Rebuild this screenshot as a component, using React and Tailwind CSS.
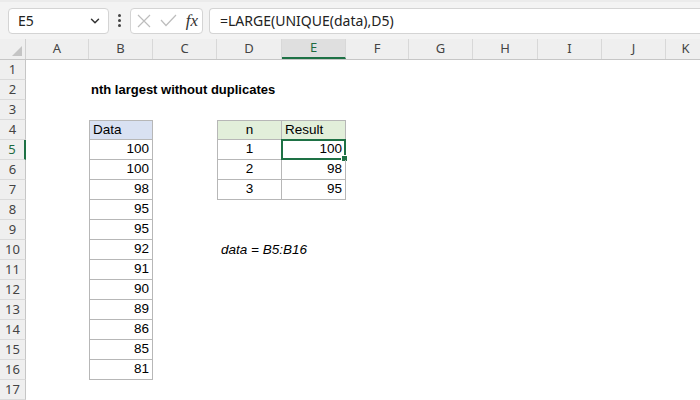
import { ChevronDown } from 'lucide-react'

const cols = [
  { k: 'A', w: 'w-[63px]' },
  { k: 'B', w: 'w-[64px]' },
  { k: 'C', w: 'w-[64px]' },
  { k: 'D', w: 'w-[65px]' },
  { k: 'E', w: 'w-[64px]' },
  { k: 'F', w: 'w-[63px]' },
  { k: 'G', w: 'w-[64px]' },
  { k: 'H', w: 'w-[65px]' },
  { k: 'I', w: 'w-[64px]' },
  { k: 'J', w: 'w-[64px]' },
  { k: 'K', w: 'w-[40px]' },
]

const dataVals = [100, 100, 98, 95, 95, 92, 91, 90, 89, 86, 85, 81]
const results = [
  ['1', '100'],
  ['2', '98'],
  ['3', '95'],
]

// content for a given cell, returns { text, cls }
function cellInfo(r, c) {
  const box = 'border-[#b7b7b7]'
  if (r === 2 && c === 'B') return { text: 'nth largest without duplicates', cls: 'font-bold text-[13px] overflow-visible whitespace-nowrap z-10 pl-[2px]' }
  if (c === 'B' && r === 4) return { text: 'Data', cls: `bg-[#d9e1f2] border ${box} pl-[3px]` }
  if (c === 'B' && r >= 5 && r <= 16)
    return { text: String(dataVals[r - 5]), cls: `border-x border-b ${box} justify-end pr-[3px]` }
  if (r === 4 && c === 'D') return { text: 'n', cls: `bg-[#e2efda] border ${box} justify-center` }
  if (r === 4 && c === 'E') return { text: 'Result', cls: `bg-[#e2efda] border-y border-r ${box} pl-[3px]` }
  if (r >= 5 && r <= 7 && c === 'D') return { text: results[r - 5][0], cls: `border-x border-b ${box} justify-center` }
  if (r >= 5 && r <= 7 && c === 'E') return { text: results[r - 5][1], cls: `border-r border-b ${box} justify-end pr-[3px]` }
  if (r === 10 && c === 'D') return { text: 'data = B5:B16', cls: 'italic whitespace-nowrap pl-[4px] overflow-visible' }
  return { text: '', cls: '' }
}

export default function App() {
  const rows = Array.from({ length: 17 }, (_, i) => i + 1)
  return (
    <div className="w-[700px] h-[400px] overflow-hidden bg-white flex flex-col" style={{ fontFamily: '"Liberation Sans", Arial, sans-serif' }}>
      {/* formula bar */}
      <div className="h-[39px] shrink-0 bg-[#f3f3f3] flex items-center pl-[8px] gap-[6px] border-t-2 border-[#ebebeb]">
        <div className="w-[101px] h-[26px] bg-white border border-[#d4d4d4] rounded-[4px] flex items-center justify-between pl-[9px] pr-[6px] text-[14px] text-[#222]" style={{ fontFamily: '"Noto Sans", sans-serif' }}>
          <span>E5</span>
          <ChevronDown size={14} strokeWidth={2.5} className="text-[#333]" />
        </div>
        <div className="flex flex-col gap-[2px] px-[3px]">
          <span className="w-[3px] h-[3px] rounded-full bg-[#444]" />
          <span className="w-[3px] h-[3px] rounded-full bg-[#444]" />
          <span className="w-[3px] h-[3px] rounded-full bg-[#444]" />
        </div>
        <div className="w-[73px] h-[26px] bg-white border border-[#d4d4d4] rounded-[4px] flex items-center justify-between pl-[6px] pr-[4px]">
          <svg width="14" height="14" viewBox="0 0 14 14" fill="none" stroke="#bdbdbd" strokeWidth="1.2">
            <path d="M1 1 L13 13 M13 1 L1 13" />
          </svg>
          <svg width="17" height="13" viewBox="0 0 17 13" fill="none" stroke="#bdbdbd" strokeWidth="1.2">
            <path d="M1 6 L6 11.5 L16 1" />
          </svg>
          <span className="italic text-[17px] text-[#333] leading-none" style={{ fontFamily: '"Liberation Serif", serif' }}>fx</span>
        </div>
        <div className="flex-1 h-[26px] bg-white border border-[#d4d4d4] rounded-l-[4px] border-r-0 flex items-center pl-[10px] text-[14px] text-[#222]" style={{ fontFamily: '"Noto Sans", sans-serif' }}>
          =LARGE(UNIQUE(data),D5)
        </div>
      </div>

      {/* column headers */}
      <div className="h-[21px] shrink-0 flex bg-[#efefef] border-b border-[#c6c6c6] text-[13px] text-[#444]" style={{ fontFamily: '"Noto Sans", sans-serif' }}>
        <div className="w-[26px] shrink-0 border-r border-[#d0d0d0] flex items-end justify-end p-[3px]">
          <svg width="10" height="10" viewBox="0 0 10 10"><path d="M10 0 L10 10 L0 10 Z" fill="#c4c4c4" /></svg>
        </div>
        {cols.map((c) => (
          <div
            key={c.k}
            className={`${c.w} shrink-0 flex items-center justify-center border-r border-[#d8d8d8] ${c.k === 'E' ? 'bg-[#dfdfdf] border-b-2 border-b-[#1e7145] text-[#1e6b41]' : ''}`}
          >
            {c.k}
          </div>
        ))}
      </div>

      {/* rows */}
      {rows.map((r) => (
        <div key={r} className="h-[20px] shrink-0 flex text-[13.5px] text-black">
          <div
            className={`w-[26px] shrink-0 flex items-center justify-center bg-[#efefef] border-b border-[#dadada] text-[13px] ${r === 5 ? 'bg-[#dfdfdf] border-r-2 border-r-[#1e7145] text-[#1e6b41]' : 'border-r border-r-[#c6c6c6] text-[#444]'}`}
            style={{ fontFamily: '"Noto Sans", sans-serif' }}
          >
            {r}
          </div>
          {cols.map((c) => {
            const info = cellInfo(r, c.k)
            const sel = r === 5 && c.k === 'E'
            return (
              <div key={c.k} className={`${c.w} shrink-0 relative flex items-center ${info.cls}`}>
                {info.text}
                {sel && (
                  <div className="absolute -left-[1px] -top-[1px] -right-[1px] -bottom-[1px] border-2 border-[#1e7145]">
                    <div className="absolute -right-[4px] -bottom-[4px] w-[7px] h-[7px] bg-[#1e7145] border border-white" />
                  </div>
                )}
              </div>
            )
          })}
        </div>
      ))}
    </div>
  )
}
